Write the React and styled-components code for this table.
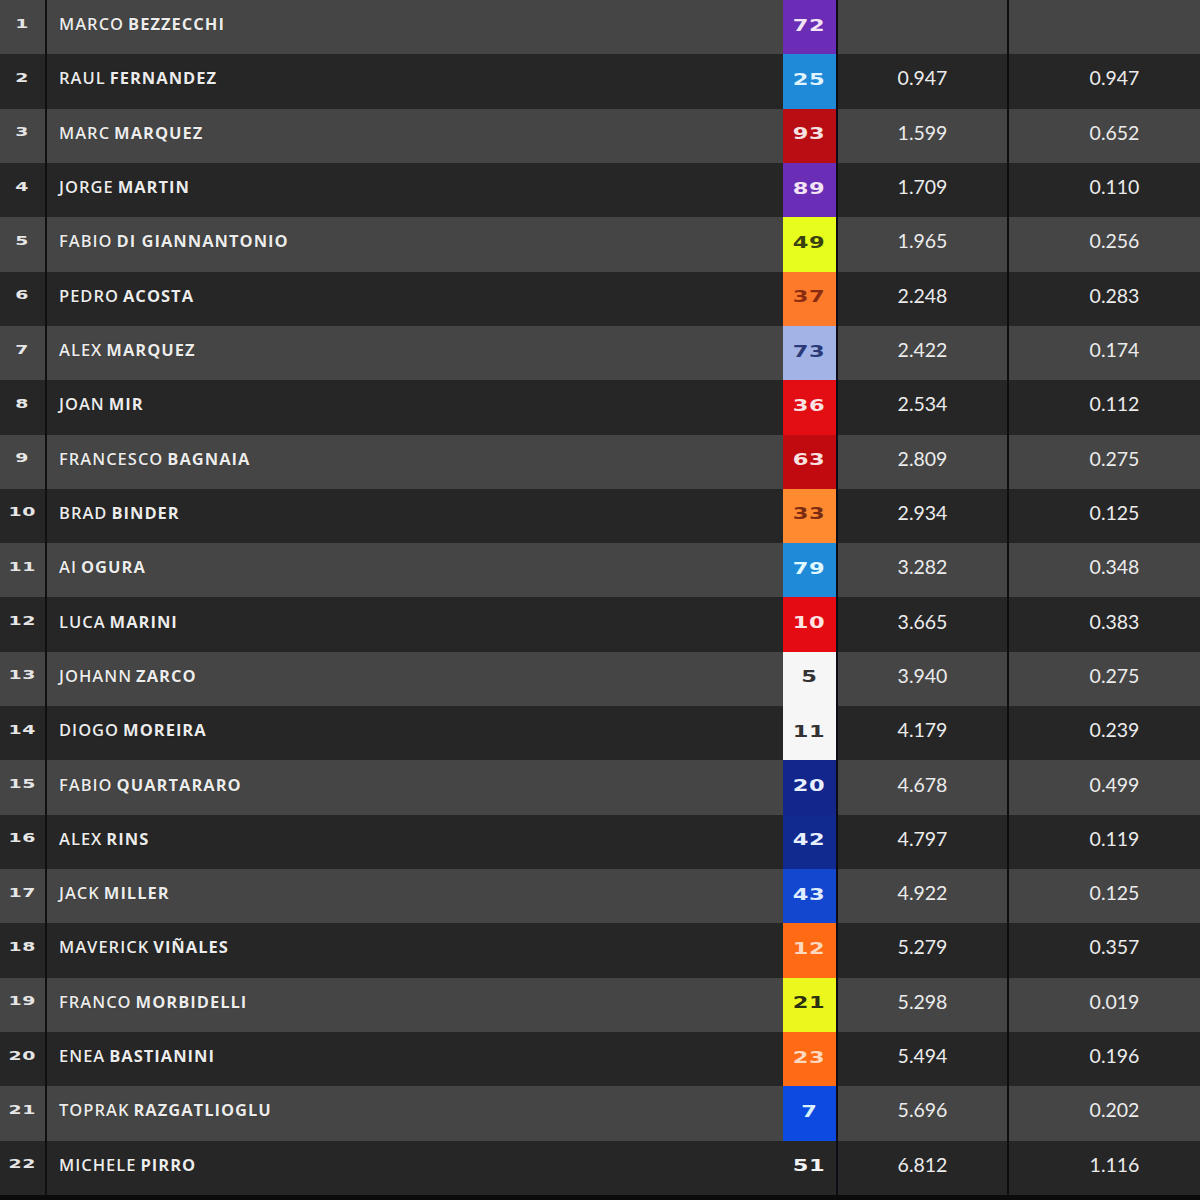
import React from 'react';
import styled, { createGlobalStyle } from 'styled-components';

const Global = createGlobalStyle`
  html, body {
    margin: 0;
    padding: 0;
    background: #0b0b0b;
  }
`;

const Board = styled.div`
  width: 1200px;
  height: 1200px;
  display: flex;
  flex-direction: column;
  background: #0b0b0b;
  font-family: "Open Sans", "Liberation Sans", sans-serif;
`;

const Row = styled.div`
  display: grid;
  grid-template-columns: 47px 736px 55px 171px 1fr;
  height: 54.32px;
  background: ${p => (p.$odd ? '#454545' : '#262626')};
`;

const Cell = styled.div`
  display: flex;
  align-items: center;
  padding-bottom: 7px;
  box-sizing: border-box;
`;

const Pos = styled(Cell)`
  justify-content: center;
  border-right: 2px solid #101010;
  color: #e6e6e6;
  font-family: "DejaVu Sans", sans-serif;
  font-weight: 700;
  font-size: 14px;
  & > span {
    display: inline-block;
    transform: scale(1.35, 0.85);
    letter-spacing: 0.5px;
  }
`;

const Name = styled(Cell)`
  padding-left: 12px;
  color: #ececec;
  font-size: 16.5px;
  text-transform: uppercase;
  text-shadow: 0 0 1px rgba(0, 0, 0, 0.6);
  letter-spacing: 1px;
`;

const First = styled.span`
  font-weight: 600;
  margin-right: 4px;
`;

const Last = styled.span`
  font-weight: 700;
`;

const Badge = styled(Cell)`
  justify-content: center;
  padding-bottom: 4px;
  background: ${p => p.$bg};
  color: ${p => p.$fg};
  border-right: 2px solid #0c0c16;
  font-family: "DejaVu Sans", sans-serif;
  font-weight: 700;
  font-size: 18px;
  & > span {
    display: inline-block;
    transform: scale(1.25, 0.9);
    letter-spacing: 0.5px;
  }
`;

const Time = styled(Cell)`
  justify-content: center;
  color: #ececec;
  font-family: Lato, "Liberation Sans", sans-serif;
  font-size: 19.5px;
  border-right: ${p => (p.$divider ? '2px solid #0e0e0e' : 'none')};
  padding-left: ${p => (p.$divider ? '0' : '20px')};
`;

const riders = [
  ['Marco', 'Bezzecchi', '72', '#6b2db5', '#f2e4f4', '', ''],
  ['Raul', 'Fernandez', '25', '#1e8ad8', '#e0f4ff', '0.947', '0.947'],
  ['Marc', 'Marquez', '93', '#b80d12', '#f6e2e2', '1.599', '0.652'],
  ['Jorge', 'Martin', '89', '#6a2db5', '#f2e4f4', '1.709', '0.110'],
  ['Fabio', 'Di Giannantonio', '49', '#e6fd1e', '#3a4210', '1.965', '0.256'],
  ['Pedro', 'Acosta', '37', '#fd7a2a', '#8a2c12', '2.248', '0.283'],
  ['Alex', 'Marquez', '73', '#a3b3e6', '#2a3a78', '2.422', '0.174'],
  ['Joan', 'Mir', '36', '#e20e14', '#f8e2e2', '2.534', '0.112'],
  ['Francesco', 'Bagnaia', '63', '#c00a10', '#f8e2e2', '2.809', '0.275'],
  ['Brad', 'Binder', '33', '#ff8a30', '#7a2c12', '2.934', '0.125'],
  ['Ai', 'Ogura', '79', '#1f8ad8', '#e0f8ff', '3.282', '0.348'],
  ['Luca', 'Marini', '10', '#e40c12', '#ffe2e2', '3.665', '0.383'],
  ['Johann', 'Zarco', '5', '#f6f6f6', '#333333', '3.940', '0.275'],
  ['Diogo', 'Moreira', '11', '#f6f6f6', '#333333', '4.179', '0.239'],
  ['Fabio', 'Quartararo', '20', '#12268c', '#e8f0ff', '4.678', '0.499'],
  ['Alex', 'Rins', '42', '#102a90', '#e8f0ff', '4.797', '0.119'],
  ['Jack', 'Miller', '43', '#1447d0', '#e0ecff', '4.922', '0.125'],
  ['Maverick', 'Viñales', '12', '#ff6a14', '#ffd8c0', '5.279', '0.357'],
  ['Franco', 'Morbidelli', '21', '#ecf71e', '#2a3010', '5.298', '0.019'],
  ['Enea', 'Bastianini', '23', '#ff6a14', '#ffd8c0', '5.494', '0.196'],
  ['Toprak', 'Razgatlioglu', '7', '#0d4ae0', '#d8f0ff', '5.696', '0.202'],
  ['Michele', 'Pirro', '51', 'transparent', '#f2f2f2', '6.812', '1.116'],
];

export default function App() {
  return (
    <Board>
      <Global />
      {riders.map(([first, last, num, bg, fg, gap, prev], i) => (
        <Row key={i} $odd={i % 2 === 0}>
          <Pos><span>{i + 1}</span></Pos>
          <Name>
            <First>{first}</First>
            <Last>{last}</Last>
          </Name>
          <Badge $bg={bg} $fg={fg}><span>{num}</span></Badge>
          <Time $divider>{gap}</Time>
          <Time>{prev}</Time>
        </Row>
      ))}
    </Board>
  );
}
